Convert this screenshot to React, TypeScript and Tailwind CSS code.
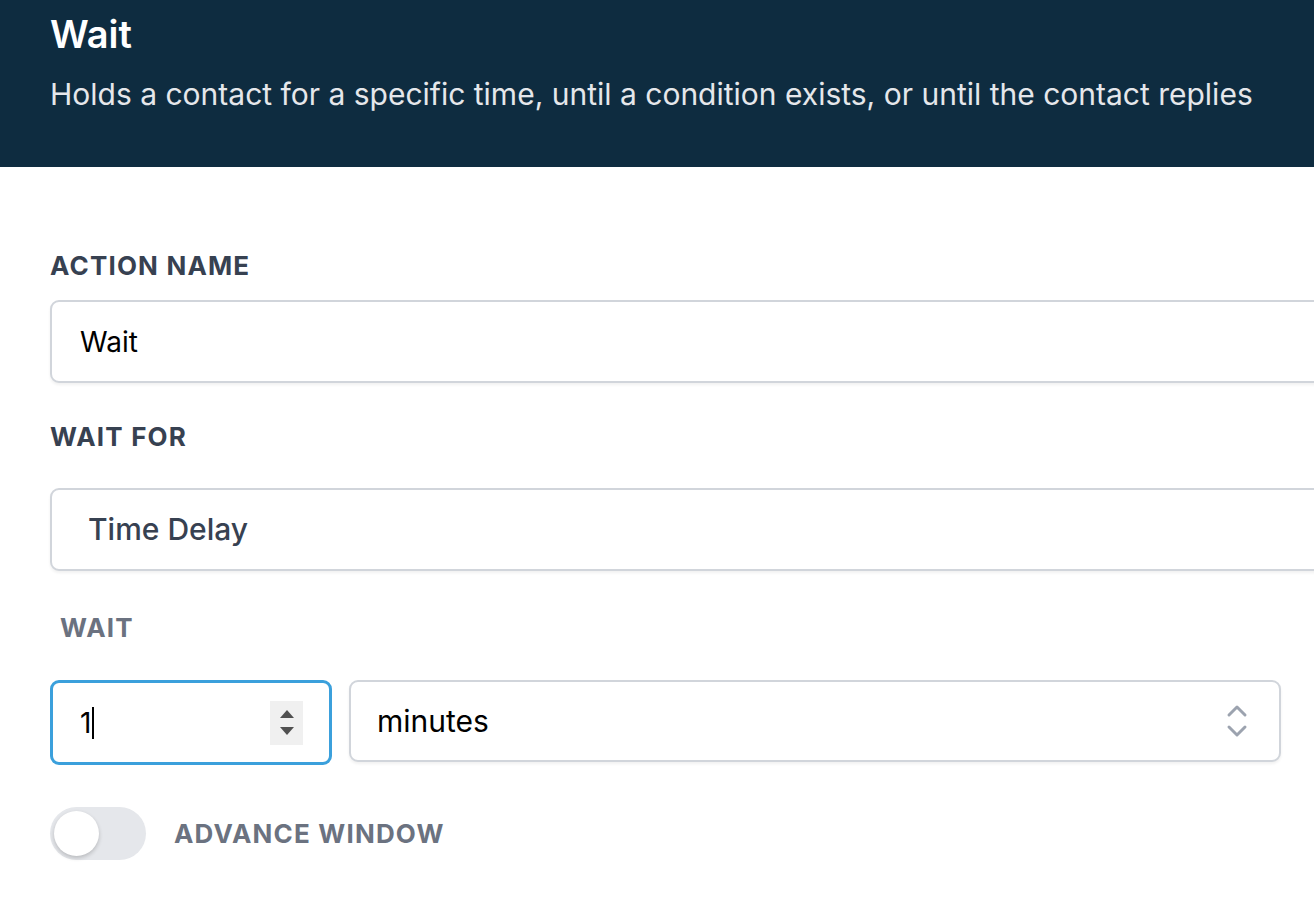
import { useState } from "react";

// Label styles shared by the form fields
const labelClass =
    "text-[26px] font-bold uppercase tracking-[0.045em] leading-none";
const fieldClass =
    "flex items-center rounded-[9px] border-2 border-[#d1d5db] bg-white shadow-[0_2px_3px_rgba(0,0,0,0.06)]";

function Chevrons() {
    return (
        <svg width="22" height="34" viewBox="0 0 22 34" fill="none">
            <path
                d="M3 11 L11 3 L19 11"
                stroke="#9ca3af"
                strokeWidth="3"
                strokeLinecap="round"
                strokeLinejoin="round"
            />
            <path
                d="M3 23 L11 31 L19 23"
                stroke="#9ca3af"
                strokeWidth="3"
                strokeLinecap="round"
                strokeLinejoin="round"
            />
        </svg>
    );
}

export default function App() {
    const [advance, setAdvance] = useState(false);

    return (
        <div
            className="w-[1314px] h-[924px] overflow-hidden bg-white"
            style={{ fontFamily: "Inter, 'Noto Sans', sans-serif" }}
        >
            {/* Header */}
            <div className="h-[167px] bg-[#0e2c40] px-[50px] pt-[12px]">
                <h1 className="text-[38px] font-semibold leading-[44px] text-white">
                    Wait
                </h1>
                <p className="mt-[19px] text-[30px] leading-[38px] text-[#e5e7eb]">
                    Holds a contact for a specific time, until a condition
                    exists, or until the contact replies
                </p>
            </div>

            {/* Form */}
            <div className="w-[1340px] pl-[50px] pt-[86px] flex flex-col">
                <label className={`${labelClass} text-[#374151]`}>
                    Action Name
                </label>
                <div className={`${fieldClass} mt-[21px] h-[83px] px-[28px]`}>
                    <span className="text-[28px] text-black">Wait</span>
                </div>

                <label className={`${labelClass} mt-[41px] text-[#374151]`}>
                    Wait For
                </label>
                <div className={`${fieldClass} mt-[38px] h-[83px] px-[36px]`}>
                    <span className="text-[30px] font-medium text-[#374151]">
                        Time Delay
                    </span>
                </div>

                <label
                    className={`${labelClass} mt-[44px] ml-[10px] text-[#6b7280]`}
                >
                    Wait
                </label>
                <div className="mt-[39px] flex gap-[17px]">
                    <div className="flex h-[85px] w-[282px] items-center rounded-[9px] border-[3px] border-[#3ba0dc] bg-white pl-[27px] pr-[26px]">
                        <span className="text-[28px] text-black">1</span>
                        <span className="ml-[1px] h-[32px] w-[2px] bg-black" />
                        <div className="ml-auto flex h-[44px] w-[33px] flex-col items-center justify-center gap-[9px] bg-[#f0f0f0]">
                            <span className="h-0 w-0 border-x-[7px] border-b-[8px] border-x-transparent border-b-[#505050]" />
                            <span className="h-0 w-0 border-x-[7px] border-t-[8px] border-x-transparent border-t-[#505050]" />
                        </div>
                    </div>
                    <div
                        className={`${fieldClass} h-[82px] w-[932px] justify-between pl-[26px] pr-[31px]`}
                    >
                        <span className="text-[30px] text-black">minutes</span>
                        <Chevrons />
                    </div>
                </div>

                <div className="mt-[42px] flex items-center gap-[28px]">
                    <button
                        type="button"
                        onClick={() => setAdvance(!advance)}
                        className={`flex h-[53px] w-[96px] items-center rounded-full p-[4px] ${
                            advance ? "bg-[#3ba0dc] justify-end" : "bg-[#e5e7eb]"
                        }`}
                    >
                        <span className="h-[45px] w-[45px] rounded-full bg-white shadow-[0_2px_4px_rgba(0,0,0,0.2)]" />
                    </button>
                    <span className={`${labelClass} text-[#6b7280]`}>
                        Advance Window
                    </span>
                </div>
            </div>
        </div>
    );
}
